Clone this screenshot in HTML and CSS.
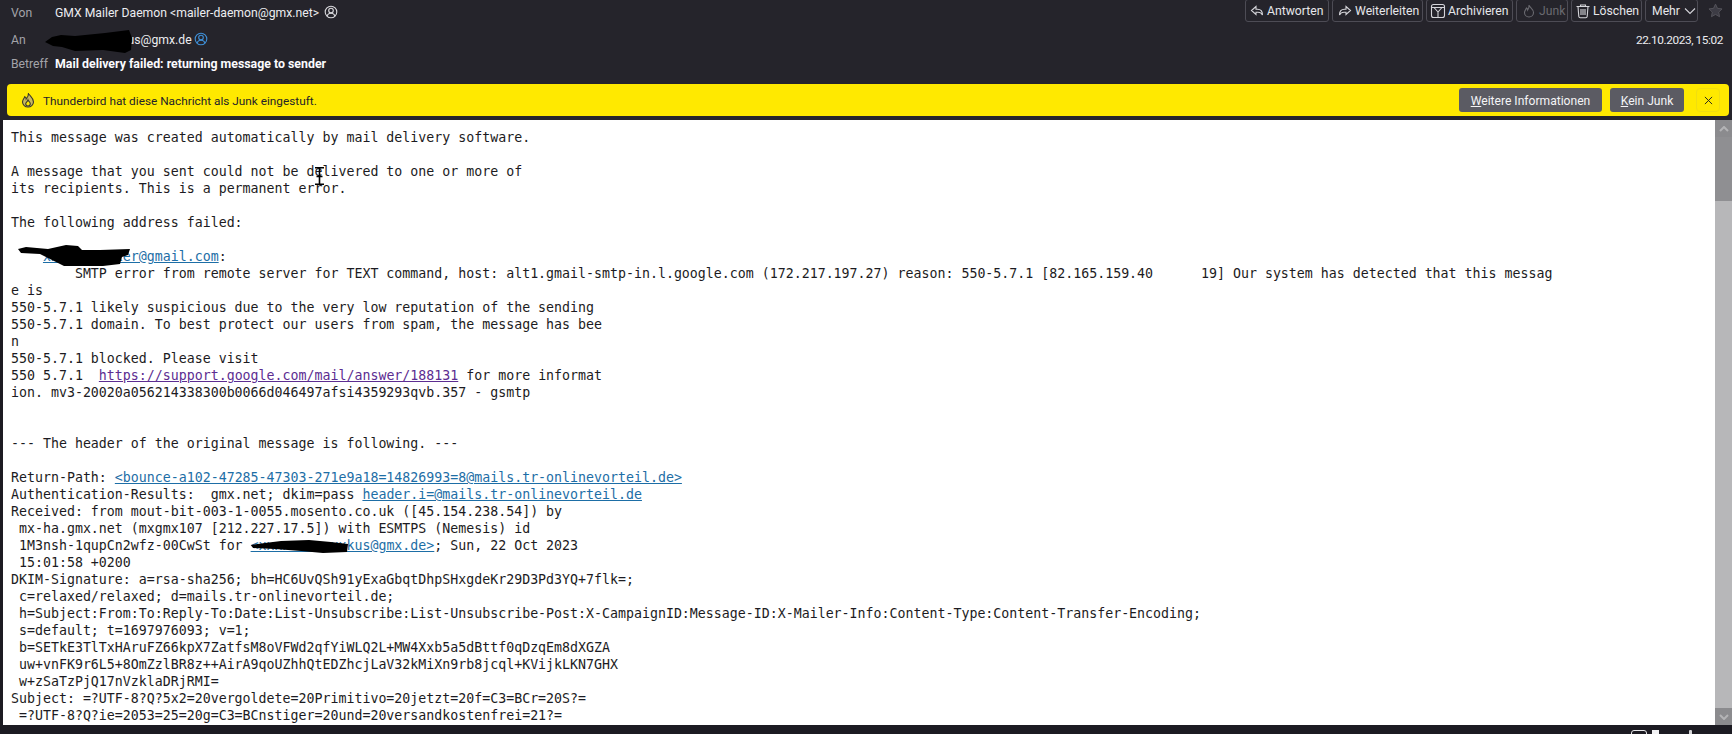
FILE: index.html
```html
<!DOCTYPE html>
<html lang="de">
<head>
<meta charset="utf-8">
<title>Mail delivery failed</title>
<link rel="stylesheet" href="styles.css">
</head>
<body>
<div class="app">
  <header class="head">
    <div class="row row-from">
      <span class="label">Von</span>
      <span class="value">GMX Mailer Daemon &lt;mailer-daemon@gmx.net&gt;</span>
      <svg class="contact" viewBox="0 0 14 14"><circle cx="7" cy="7" r="5.8"/><circle cx="7" cy="5.6" r="2.3"/><path d="M3 11c.8-2 2.2-2.8 4-2.8s3.200.8 4 2.800"/></svg>
      <div class="actions">
        <button class="act act-reply"><svg class="ico" viewBox="0 0 14 14"><path d="M6 2.500 1.500 6.500 6 10.500V8.200h2c2 0 3.500.8 4.500 2.800 0-3.500-1.800-5.800-5-5.800H6z"/></svg>Antworten</button>
        <button class="act act-fwd"><svg class="ico" viewBox="0 0 14 14"><path d="M8 2.500 12.500 6.500 8 10.500V8.200H6c-2 0-3.500.8-4.500 2.800 0-3.500 1.800-5.800 5-5.800H8z"/></svg>Weiterleiten</button>
        <button class="act act-arch"><svg class="ico ico-lg" viewBox="0 0 16 16"><rect x="1.500" y="1.500" width="13" height="13" rx="2"/><path d="M1.500 4.500h13M4 4.500 8 9l4-4.500M8 9v5.500"/></svg>Archivieren</button>
        <button class="act act-off"><svg class="ico" viewBox="0 0 14 14"><path d="M7 1c.5 2.500 4.500 4 4.500 7.500A4.500 4.500 0 0 1 7 13a4.500 4.500 0 0 1-4.500-4.500C2.500 6.500 4 5.500 4.500 4c.8.5 1.200 1.200 1.200 2C6.600 4.800 7.200 3 7 1z"/></svg>Junk</button>
        <button class="act act-del"><svg class="ico ico-lg" viewBox="0 0 16 16"><path d="M1.500 3.500h13M5.500 3.500V2h5v1.500M3 3.500l.8 10a1.500 1.500 0 0 0 1.500 1.300h5.400a1.500 1.500 0 0 0 1.500-1.300l.8-10M6 6v6M8 6v6M10 6v6"/></svg>Löschen</button>
        <button class="act act-more">Mehr<svg class="chev" viewBox="0 0 12 8"><path d="M1 1.500 6 6.500l5-5"/></svg></button>
        <svg class="star" viewBox="0 0 16 16"><path d="M8 1.200 10.100 5.700l4.900.6-3.600 3.400.9 4.900L8 12.200l-4.300 2.400.9-4.900L1 6.300l4.900-.6z"/></svg>
      </div>
    </div>
    <div class="row row-to">
      <span class="label">An</span>
      <span class="value">xxxxxxxxxxxxus@gmx.de</span>
      <svg class="contact contact-blue" viewBox="0 0 14 14"><circle cx="7" cy="7" r="5.800"/><circle cx="7" cy="5.600" r="2.300"/><path d="M3 11c.8-2 2.200-2.800 4-2.800s3.200.8 4 2.800"/></svg>
      <span class="date">22.10.2023, 15:02</span>
      <svg class="blot blot-to" viewBox="0 0 88 24"><path d="M0 12 7 7 16 5 30 6 60 3 84 0 87 8 86 20 80 23 58 20 30 21 17 17 8 16z"/></svg>
    </div>
    <div class="row row-subject">
      <span class="label">Betreff</span>
      <span class="value subject">Mail delivery failed: returning message to sender</span>
    </div>
    <div class="notice">
      <svg class="flame" viewBox="0 0 14 16"><path d="M7.500 1c.5 2.800 5 4.500 5 9a5.300 5.300 0 0 1-5.500 5 5.300 5.300 0 0 1-5.500-5c0-2.300 1.700-3.600 2.300-5.300.9.600 1.400 1.400 1.400 2.300C6.400 5.500 7.800 3.500 7.500 1z"/><path class="flame-in" d="M7 8c.4 1.300 2.300 2 2.300 3.800A2.300 2.300 0 0 1 7 14a2.300 2.300 0 0 1-2.300-2.200C4.700 10.200 6.500 9.700 7 8z"/></svg>
      <span class="notice-text">Thunderbird hat diese Nachricht als Junk eingestuft.</span>
      <button class="nbtn nbtn-more"><u>W</u>eitere Informationen</button>
      <button class="nbtn nbtn-junk"><u>K</u>ein Junk</button>
      <button class="nclose"><svg viewBox="0 0 10 10"><path d="M1 1l8 8M9 1l-8 8"/></svg></button>
    </div>
  </header>
  <main class="body">
    <div class="msg">
<pre class="text">This message was created automatically by mail delivery software.

A message that you sent could not be delivered to one or more of
its recipients. This is a permanent error.

The following address failed:

    <a class="lnk" href="#">xxxxxxxxxxer@gmail.com</a>:
        SMTP error from remote server for TEXT command, host: alt1.gmail-smtp-in.l.google.com (172.217.197.27) reason: 550-5.7.1 [82.165.159.40      19] Our system has detected that this messag
e is
550-5.7.1 likely suspicious due to the very low reputation of the sending
550-5.7.1 domain. To best protect our users from spam, the message has bee
n
550-5.7.1 blocked. Please visit
550 5.7.1  <a class="lnk lnk-seen" href="#">https://support.google.com/mail/answer/188131</a> for more informat
ion. mv3-20020a056214338300b0066d046497afsi4359293qvb.357 - gsmtp


--- The header of the original message is following. ---

Return-Path: <a class="lnk" href="#">&lt;bounce-a102-47285-47303-271e9a18=14826993=8@mails.tr-onlinevorteil.de&gt;</a>
Authentication-Results:  gmx.net; dkim=pass <a class="lnk" href="#">header.i=@mails.tr-onlinevorteil.de</a>
Received: from mout-bit-003-1-0055.mosento.co.uk ([45.154.238.54]) by
 mx-ha.gmx.net (mxgmx107 [212.227.17.5]) with ESMTPS (Nemesis) id
 1M3nsh-1qupCn2wfz-00CwSt for <a class="lnk" href="#">&lt;xxxxxxxxxxxkus@gmx.de&gt;</a>; Sun, 22 Oct 2023
 15:01:58 +0200
DKIM-Signature: a=rsa-sha256; bh=HC6UvQSh91yExaGbqtDhpSHxgdeKr29D3Pd3YQ+7flk=;
 c=relaxed/relaxed; d=mails.tr-onlinevorteil.de;
 h=Subject:From:To:Reply-To:Date:List-Unsubscribe:List-Unsubscribe-Post:X-CampaignID:Message-ID:X-Mailer-Info:Content-Type:Content-Transfer-Encoding;
 s=default; t=1697976093; v=1;
 b=SETkE3TlTxHAruFZ66kpX7ZatfsM8oVFWd2qfYiWLQ2L+MW4Xxb5a5dBttf0qDzqEm8dXGZA
 uw+vnFK9r6L5+8OmZzlBR8z++AirA9qoUZhhQtEDZhcjLaV32kMiXn9rb8jcql+KVijkLKN7GHX
 w+zSaTzPjQ17nVzklaDRjRMI=
Subject: =?UTF-8?Q?5x2=20vergoldete=20Primitivo=20jetzt=20f=C3=BCr=20S?=
 =?UTF-8?Q?ie=2053=25=20g=C3=BCnstiger=20und=20versandkostenfrei=21?=</pre>
      <svg class="blot blot-addr" viewBox="0 0 112 21"><path d="M0 4 8 2 30 4 48 0 60 1 64 5 82 5 112 4 110 10 104 12 102 19 85 21 46 21 38 17 22 9 3 8z"/></svg>
      <svg class="blot blot-rcpt" viewBox="0 0 97 13"><path d="M0 5 14 3 30 1 58 0 80 2 97 4 96 12 72 13 50 11 24 9 2 8z"/></svg>
      <svg class="cursor" viewBox="0 0 9 18"><path d="M0 .7h9M4.500 0v18M0 17.300h9M1.500 9.500h6"/></svg>
    </div>
    <div class="scroll">
      <span class="sb-btn"><svg viewBox="0 0 10 6"><path d="M1 5l4-4 4 4"/></svg></span>
      <span class="sb-thumb"></span>
      <span class="sb-track"></span>
      <span class="sb-btn"><svg viewBox="0 0 10 6"><path d="M1 1l4 4 4-4"/></svg></span>
    </div>
  </main>
  <footer class="status">
    <span class="st-box"></span>
    <span class="st-white"></span>
    <span class="st-dot"></span>
  </footer>
</div>
</body>
</html>
```
FILE: styles.css
```css
* { box-sizing: border-box; }
html, body { margin: 0; height: 100%; overflow: hidden; background: #1c1b22; }
.app { width: 1732px; height: 734px; display: flex; flex-direction: column; overflow: hidden; font-family: Roboto, "Noto Sans", sans-serif; }
.head { background: #25242b; color: #fbfbfe; height: 120px; flex: none; position: relative; }
.row { display: flex; align-items: center; padding: 0 9px 0 11px; font-size: 12.2px; }
.row-from { height: 23px; }
.row-to { height: 22px; margin-top: 5px; }
.row-subject { height: 22px; margin-top: 2px; }
.label { width: 44px; flex: none; color: #a3a3a9; padding-top: 2px; }
.value { white-space: nowrap; color: #ececf0; padding-top: 2px; }
.subject { font-weight: 700; font-size: 12.35px; color: #fbfbfe; }
.contact { width: 14px; height: 14px; margin-left: 5px; fill: none; stroke: #d8d8dc; stroke-width: 1.1; flex: none; }
.contact-blue { stroke: #3f8fd6; margin-left: 2px; }
.actions { margin-left: auto; display: flex; align-items: flex-start; gap: 3px; height: 23px; }
.act { height: 23px; display: flex; align-items: center; gap: 3px; padding: 1px 0 0 5px; margin: -1px 0 0; background: transparent; border: 1px solid #4d4c55; border-radius: 3px; color: #e6e6ea; font: inherit; font-size: 12.2px; white-space: nowrap; }
.act-reply { width: 84px; padding-left: 4px; }
.act-fwd { width: 91px; }
.act-arch { width: 87px; padding-left: 3px; gap: 2px; }
.act-off { width: 52px; color: #6a6a70; }
.act-off .ico { stroke: #6a6a70; }
.act-del { width: 71px; padding-left: 3px; gap: 2px; }
.act-more { width: 53px; margin-right: 7px; padding-left: 6px; }
.ico { width: 14px; height: 14px; fill: none; stroke: #d5d5da; stroke-width: 1.1; flex: none; }
.ico-lg { width: 16px; height: 16px; }
.chev { width: 12px; height: 8px; fill: none; stroke: #d5d5da; stroke-width: 1.1; margin-left: 1px; }
.star { width: 15px; height: 15px; fill: #3d3c45; stroke: #55545c; stroke-width: 1; margin-top: 3px; flex: none; }
.date { margin-left: auto; color: #ececf0; padding-top: 2px; font-size: 11.8px; letter-spacing: -0.4px; }
.notice { margin: 10px 3px 4px 7px; height: 32px; background: #ffe900; border-radius: 4px; display: flex; align-items: center; padding: 0 9px 0 14px; color: #23222a; font-size: 11.8px; gap: 8px; }
.flame { width: 14px; height: 16px; fill: #c9b860; stroke: #3a382c; stroke-width: 1.1; flex: none; }
.flame-in { fill: #ffe900; }
.notice-text { margin-right: auto; padding-top: 2px; }
.nbtn { height: 24px; background: #5b5b63; color: #f4f4f6; border: 0; border-radius: 3px; font: inherit; font-size: 12.1px; white-space: nowrap; padding: 2px 0 0; }
.nbtn-more { width: 143px; }
.nbtn-junk { width: 74px; margin-right: 4px; }
.nclose { width: 24px; height: 24px; background: transparent; border: 1px solid #f1de10; border-radius: 4px; padding: 0; display: flex; align-items: center; justify-content: center; }
.nclose svg { width: 9px; height: 9px; fill: none; stroke: #2a2920; stroke-width: 1.1; }
.body { flex: 1; min-height: 0; display: flex; padding-left: 3px; background: #1c1b22; }
.msg { flex: 1; min-width: 0; background: #fff; overflow: hidden; position: relative; }
.text { margin: 0; padding: 9px 0 0 8px; font-family: "DejaVu Sans Mono", "Liberation Mono", monospace; font-size: 13.28px; line-height: 17px; color: #1c1b22; }
.lnk { color: #1d6ea6; text-decoration: underline; }
.lnk-seen { color: #5c2d91; }
.blot { position: absolute; fill: #000; }
.blot-to { left: 45px; top: 30px; width: 88px; height: 24px; }
.blot-addr { left: 15px; top: 125px; width: 112px; height: 21px; }
.blot-rcpt { left: 248px; top: 420px; width: 97px; height: 13px; }
.cursor { position: absolute; left: 312px; top: 47px; width: 9px; height: 18px; fill: none; stroke: #000; stroke-width: 1.6; }
.scroll { width: 17px; flex: none; display: flex; flex-direction: column; background: #b7b7b9; }
.sb-btn { height: 17px; flex: none; background: #8b8b8e; display: flex; align-items: center; justify-content: center; }
.sb-btn svg { width: 10px; height: 6px; fill: none; stroke: #b4b4b6; stroke-width: 2; }
.sb-thumb { height: 64px; background: #8f8f92; flex: none; }
.sb-track { flex: 1; }
.status { height: 9px; flex: none; background: #1c1b22; display: flex; justify-content: flex-end; padding: 5px 40px 0 0; overflow: hidden; }
.st-box { width: 16px; height: 12px; border: 1px solid #e8e8ea; border-radius: 3px; margin-right: 5px; }
.st-white { width: 7px; height: 6px; background: #f2f2f4; margin-right: 30px; }
.st-dot { width: 3px; height: 5px; background: #d5d5d8; border-radius: 1px; }
```
